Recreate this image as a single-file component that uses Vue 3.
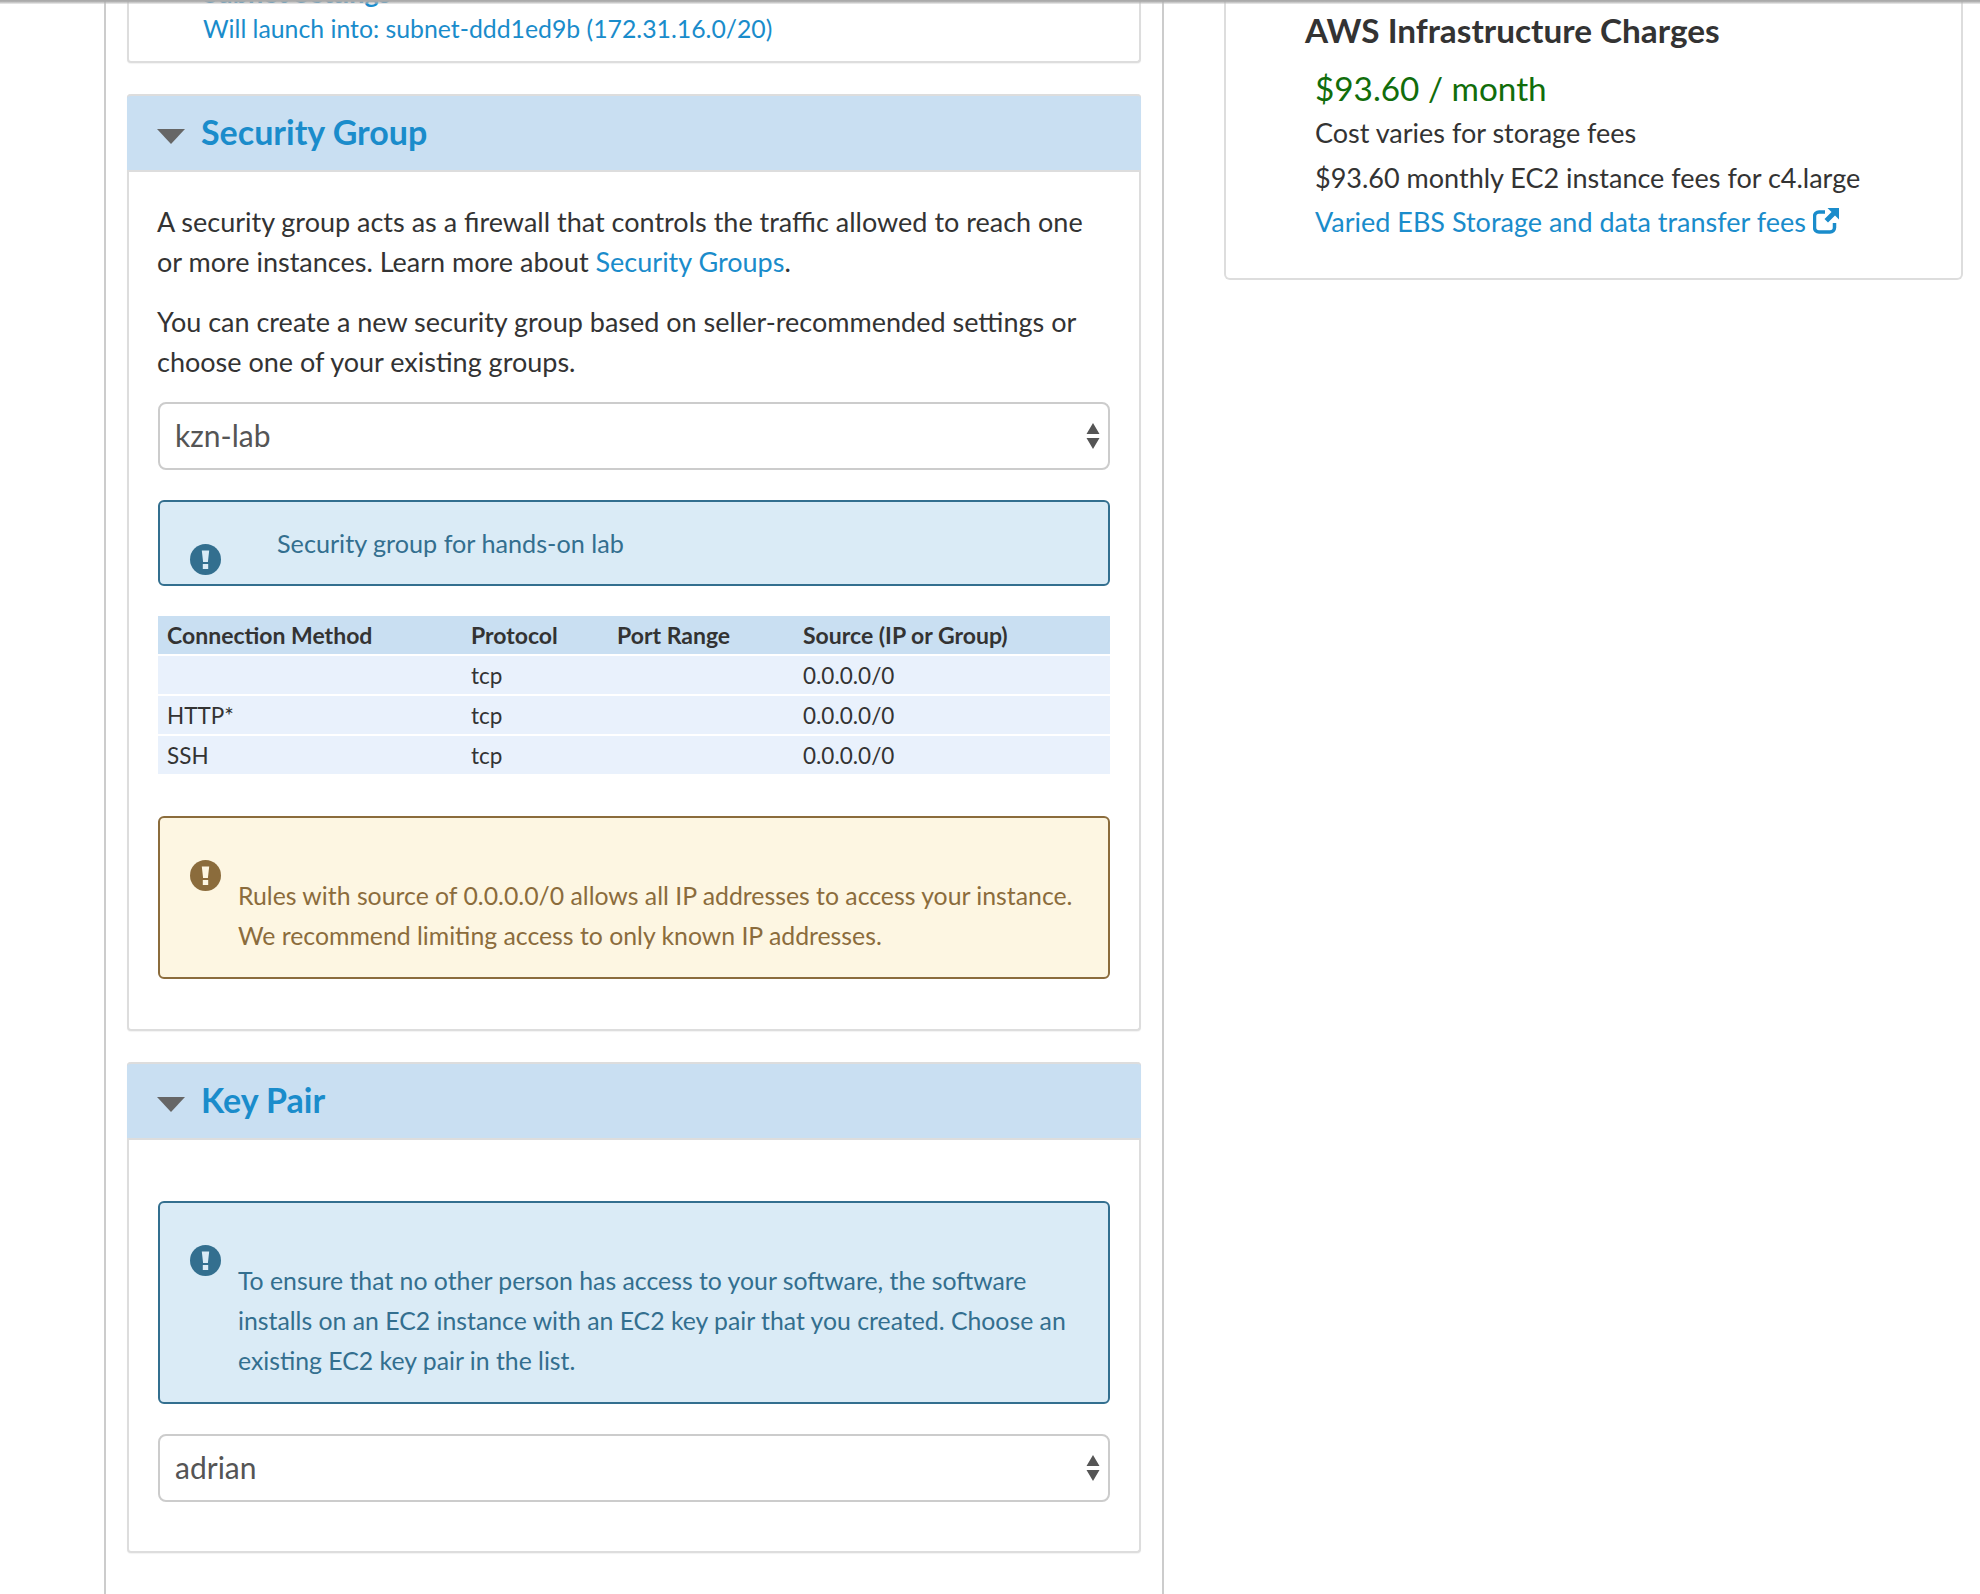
<template>
  <div class="page">
    <div class="top-shade"></div>
    <div class="col-main">
      <section class="card card-top">
        <h3 class="cut-title">Subnet Settings</h3>
        <p class="launch">Will launch into: subnet-ddd1ed9b (172.31.16.0/20)</p>
      </section>

      <section class="card">
        <header class="card-head">
          <span class="caret"></span>
          <h2>Security Group</h2>
        </header>
        <div class="card-body sg-body">
          <p class="para">A security group acts as a firewall that controls the traffic allowed to reach one or more instances. Learn more about <a>Security Groups</a>.</p>
          <p class="para para-2">You can create a new security group based on seller-recommended settings or choose one of your existing groups.</p>
          <div class="select">
            <span>kzn-lab</span>
            <svg class="updown" width="14" height="26" viewBox="0 0 14 26"><path d="M7 0l6.500 11H.5zM.5 15h13L7 26z" fill="#555" /></svg>
          </div>
          <div class="alert info short">
            <svg class="bang bang-low" width="31" height="31" viewBox="0 0 31 31"><circle cx="15.500" cy="15.500" r="15.500" fill="#336f8f" /><path d="M11.800 6.500h7.400l-1.300 11.500h-4.800zM12.800 20h5.400v5h-5.400z" fill="#daebf6" /></svg>
            <span class="short-text">Security group for hands-on lab</span>
          </div>
          <table class="rules">
            <thead>
              <tr>
                <th v-for="h in heads" :key="h">{{ h }}</th>
              </tr>
            </thead>
            <tbody>
              <tr v-for="(r, i) in rows" :key="i">
                <td>{{ r }}</td>
                <td>tcp</td>
                <td></td>
                <td>0.0.0.0/0</td>
              </tr>
            </tbody>
          </table>
          <div class="alert warn">
            <svg class="bang" width="31" height="31" viewBox="0 0 31 31"><circle cx="15.500" cy="15.500" r="15.500" fill="#8b6c3c" /><path d="M11.800 6.500h7.400l-1.300 11.500h-4.800zM12.800 20h5.400v5h-5.400z" fill="#fdf6e2" /></svg>
            <p>Rules with source of 0.0.0.0/0 allows all IP addresses to access your instance. We recommend limiting access to only known IP addresses.</p>
          </div>
        </div>
      </section>

      <section class="card">
        <header class="card-head">
          <span class="caret"></span>
          <h2>Key Pair</h2>
        </header>
        <div class="card-body kp-body">
          <div class="alert info">
            <svg class="bang" width="31" height="31" viewBox="0 0 31 31"><circle cx="15.500" cy="15.500" r="15.500" fill="#336f8f" /><path d="M11.800 6.500h7.400l-1.300 11.500h-4.800zM12.800 20h5.400v5h-5.400z" fill="#daebf6" /></svg>
            <p>To ensure that no other person has access to your software, the software installs on an EC2 instance with an EC2 key pair that you created. Choose an existing EC2 key pair in the list.</p>
          </div>
          <div class="select select-kp">
            <span>adrian</span>
            <svg class="updown" width="14" height="26" viewBox="0 0 14 26"><path d="M7 0l6.500 11H.5zM.5 15h13L7 26z" fill="#555" /></svg>
          </div>
        </div>
      </section>
    </div>

    <aside class="col-side">
      <section class="charges">
        <h3>AWS Infrastructure Charges</h3>
        <div class="charges-in">
          <div class="price">$93.60 / month</div>
          <div class="line">Cost varies for storage fees</div>
          <div class="line line-2">$93.60 monthly EC2 instance fees for c4.large</div>
          <a class="line ext">Varied EBS Storage and data transfer fees
            <svg width="26" height="26" viewBox="0 0 26 26"><path d="M12 4H6a4.500 4.500 0 0 0-4.500 4.500v11A4.500 4.500 0 0 0 6 24h11a4.500 4.500 0 0 0 4.500-4.500V15" fill="none" stroke="#1a8ccb" stroke-width="3.500" /><path d="M14.500 0H26v11.500l-4-4-7 7-3.500-3.500 7-7z" fill="#1a8ccb" /></svg>
          </a>
        </div>
      </section>
    </aside>
  </div>
</template>

<script setup>
const heads = ['Connection Method', 'Protocol', 'Port Range', 'Source (IP or Group)']
const rows = ['', 'HTTP*', 'SSH']
</script>

<style>
html, body { margin: 0; background: #fff; }
</style>

<style scoped>
.page {
  height: 1594px;
  overflow: hidden;
  position: relative;
  display: flex;
  box-sizing: border-box;
  padding-left: 104px;
  font-family: Lato, "Open Sans", sans-serif;
  font-size: 27px;
  color: #333;
}
.top-shade {
  position: absolute;
  left: 0;
  right: 0;
  top: 0;
  height: 4px;
  background: linear-gradient(#aaa, #aaa 30%, rgba(200,200,200,.3));
  z-index: 2;
}
.col-main {
  width: 1060px;
  flex: none;
  box-sizing: border-box;
  border-left: 2px solid #ccc;
  border-right: 2px solid #ccc;
  padding: 0 21px;
}
.col-side { flex: none; width: 800px; padding-left: 60px; box-sizing: border-box; }
.card {
  background: #fff;
  border: 2px solid #ddd;
  border-top: 0;
  border-radius: 4px;
  margin-bottom: 31px;
  box-shadow: 0 1px 1px rgba(0,0,0,.05);
}
.card-top { height: 63px; box-sizing: border-box; overflow: hidden; border-radius: 0 0 4px 4px; margin-bottom: 31px; }
.cut-title { margin: -27px 0 0 74px; font-size: 27px; line-height: 40px; color: #1a8ccb; font-weight: 700; height: 40px; }
.launch { margin: -4px 0 0 74px; color: #1a8ccb; line-height: 40px; font-size: 24.800px; }
.card-head {
  height: 78px;
  box-sizing: border-box;
  background: #c9dff2;
  border-top: 2px solid #ddd;
  border-bottom: 2px solid #ddd;
  margin: 0 -2px;
  border-radius: 4px 4px 0 0;
  padding-left: 30px;
  display: flex;
  align-items: center;
}
.caret {
  width: 0; height: 0;
  border-left: 14px solid transparent;
  border-right: 14px solid transparent;
  border-top: 15px solid #666;
  margin-top: 6px;
  margin-right: 16px;
}
.card-head h2 { margin: -4px 0 0; font-size: 34px; font-weight: 700; color: #1a8ccb; }
.card-body { padding: 30px 29px 0 29px; }
.sg-body { height: 857px; box-sizing: border-box; padding-top: 30px; }
.kp-body { height: 411px; padding-top: 61px; box-sizing: border-box; padding-bottom: 0; }
.para { margin: 0 0 0 -1px; line-height: 40px; }
.para-2 { margin-top: 20px; }
.para a { color: #1a8ccb; }
.select {
  margin-top: 20px;
  height: 68px;
  box-sizing: border-box;
  border: 2px solid #ccc;
  border-radius: 8px;
  display: flex;
  align-items: center;
  justify-content: space-between;
  padding: 0 8px 2px 15px;
  font-size: 30px;
  color: #555;
}
.select svg { margin-top: 2px; }
.select-kp { margin-top: 30px; }
.alert {
  box-sizing: border-box;
  border-radius: 6px;
  border: 2px solid;
  display: flex;
  align-items: flex-start;
  line-height: 40px;
  position: relative;
  font-size: 25.2px;
}
.alert p { margin: 58px 26px 21px 0; font-size: 24.800px; }
.info { background: #daebf6; border-color: #336f8f; color: #336f8f; }
.warn { background: #fdf6e2; border-color: #8b6c3c; color: #8b6c3c; margin-top: 42px; }
.bang { flex: none; margin: 42px 17px 0 30px; }
.short { margin-top: 30px; height: 86px; align-items: center; }
.bang-low { margin: 42px 0 0 30px; align-self: flex-start; }
.short-text { margin-left: 56px; }
.rules {
  margin-top: 30px;
  width: 100%;
  border-collapse: separate;
  border-spacing: 0;
  table-layout: fixed;
  font-size: 22.500px;
}
.rules th { background: #c9dff2; text-align: left; height: 38px; padding: 0 0 0 9px; font-weight: 700; font-size: 23px; }
.rules td { background: #e9f1fc; height: 38px; padding: 0 0 0 9px; border-top: 2px solid #fff; }
.rules th:nth-child(1) { width: 295px; }
.rules th:nth-child(2) { width: 137px; }
.rules th:nth-child(3) { width: 177px; }
.charges {
  width: 739px;
  height: 280px;
  box-sizing: border-box;
  border: 2px solid #ddd;
  border-top: 0;
  border-radius: 0 0 6px 6px;
  padding: 8px 0 0 79px;
}
.charges h3 { margin: 0; font-size: 33.300px; font-weight: 700; line-height: 44px; }
.charges-in { padding-left: 10px; }
.price { color: #116d0b; font-size: 33.300px; line-height: 44px; margin-top: 14px; }
.line { line-height: 40px; margin-top: 3px; display: block; }
.line-2 { margin-top: 5px; }
.ext { color: #1a8ccb; margin-top: 4px; }
.ext svg { vertical-align: -2px; }
</style>
